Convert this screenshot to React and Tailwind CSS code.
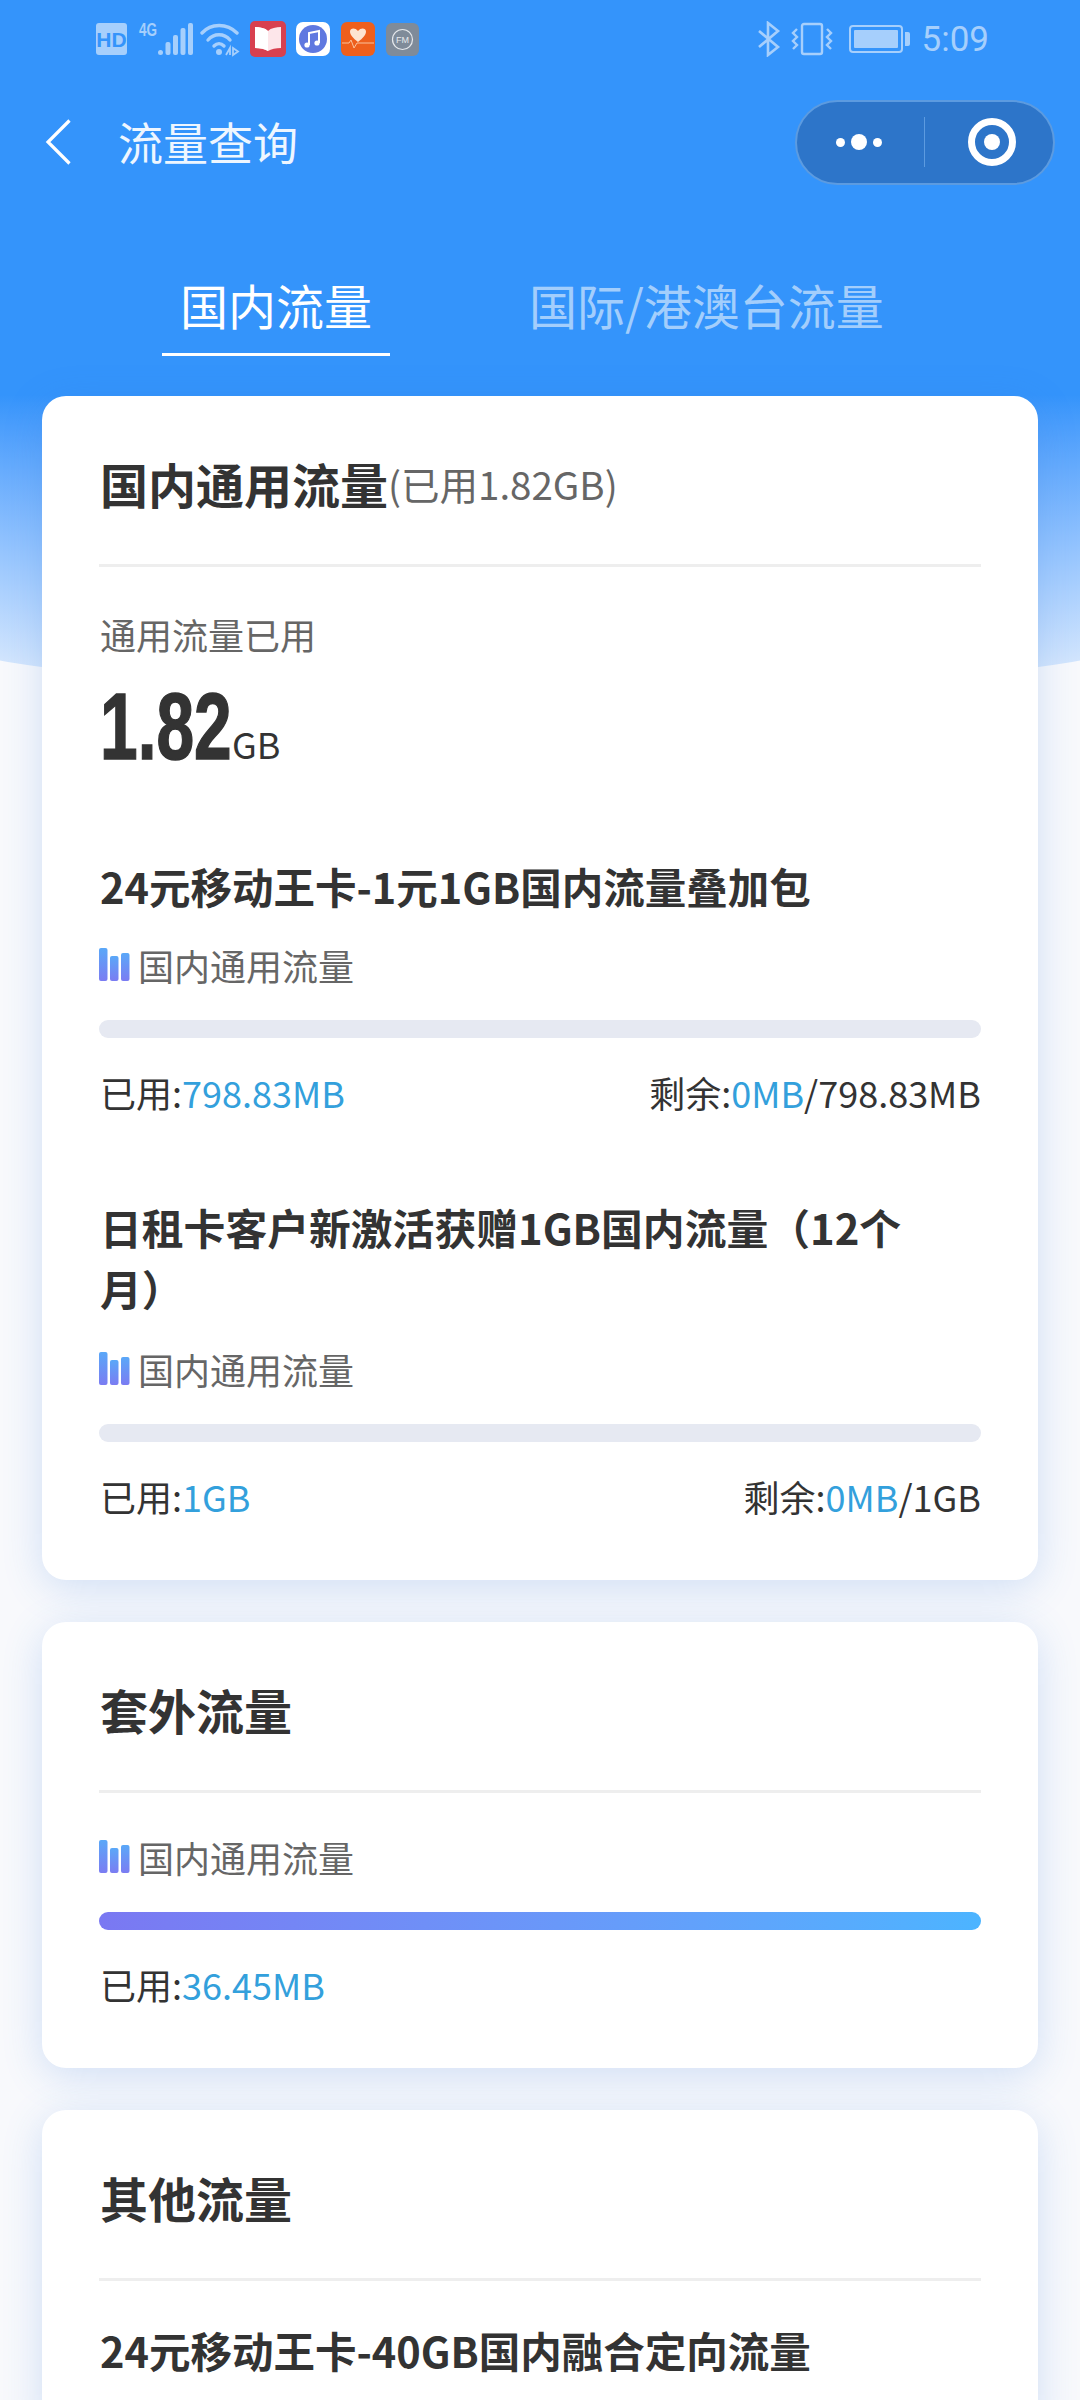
import React from "react";

const FONT = "font-['Noto_Sans_CJK_SC','Noto_Sans',sans-serif]";

function StatusLeft() {
  return (
    <div className="flex items-center">
      {/* HD */}
      <div className="w-[31px] h-[32px] rounded-[3px] bg-[#a6cffc] flex items-center justify-center text-[21px] leading-none font-bold text-[#3494fb] font-['Liberation_Sans',sans-serif]">
        HD
      </div>
      {/* 4G signal */}
      <svg width="57" height="36" viewBox="0 0 57 36" className="ml-[10px]" fill="#a6cffc">
        <text x="2" y="15" fontSize="18" fontWeight="700" fontFamily="Liberation Sans" textLength="18" lengthAdjust="spacingAndGlyphs">4G</text>
        <rect x="21" y="29" width="5" height="5" rx="2.500" />
        <rect x="28.500" y="21" width="5" height="13" rx="2" />
        <rect x="36" y="14" width="5" height="20" rx="2" />
        <rect x="43.500" y="7" width="5" height="27" rx="2" />
        <rect x="51" y="2" width="5" height="32" rx="2" />
      </svg>
      {/* wifi */}
      <svg width="40" height="36" viewBox="0 0 40 36" className="ml-[6px]" fill="none" stroke="#a6cffc" strokeWidth="3.400" strokeLinecap="round">
        <path d="M2 12C11 2 27 2 37 12" />
        <path d="M8 19C14 12 24 12 30 19" />
        <path d="M14 25C17 22 21 22 24 25" />
        <circle cx="19" cy="31" r="3" fill="#a6cffc" stroke="none" />
        <path d="M30 34V27L26 34M33 27V34L38 30.500Z" strokeWidth="1.800" strokeLinecap="butt" />
      </svg>
      {/* book */}
      <svg width="36" height="36" viewBox="0 0 36 36" className="ml-[10px]">
        <rect width="36" height="36" rx="5" fill="#d8404f" />
        <path d="M5 6C10 6 15 7 18 10C21 7 26 6 31 6V27C26 27 21 28 18 30C15 28 10 27 5 27Z" fill="#fde6ea" />
        <path d="M5 6C10 6 15 7 18 10V30C15 28 10 27 5 27Z" fill="#fff" />
      </svg>
      {/* music */}
      <svg width="34" height="34" viewBox="0 0 34 34" className="ml-[10px]">
        <rect width="34" height="34" rx="7" fill="#fff" />
        <circle cx="17" cy="17" r="14" fill="#5f78e0" />
        <path d="M13 23V11L23 9V21" fill="none" stroke="#fff" strokeWidth="2" />
        <circle cx="11" cy="23" r="2.600" fill="#fff" />
        <circle cx="21" cy="21" r="2.600" fill="#fff" />
      </svg>
      {/* heart */}
      <svg width="34" height="34" viewBox="0 0 34 34" className="ml-[11px]">
        <rect width="34" height="34" rx="6" fill="#ee5f1c" />
        <path d="M20 20C15 16 12 13 12 9.500C12 6 17 5 20 9C23 5 28 6 28 9.500C28 13 25 16 20 20Z" transform="translate(-3 0)" fill="#fde4d0" />
        <path d="M1 21H8L10 18L13 26L16 21H33" fill="none" stroke="#f9c29b" strokeWidth="1" />
      </svg>
      {/* FM */}
      <svg width="33" height="33" viewBox="0 0 33 33" className="ml-[11px]">
        <rect width="33" height="33" rx="6" fill="#7f8b99" />
        <circle cx="16.500" cy="16.500" r="10" fill="none" stroke="#e6e9ec" strokeWidth="1.200" />
        <text x="16.500" y="20" textAnchor="middle" fontSize="9" fill="#e6e9ec" fontFamily="Liberation Sans">FM</text>
      </svg>
    </div>
  );
}

function StatusRight() {
  return (
    <div className="flex items-center">
      {/* bluetooth */}
      <svg width="24" height="36" viewBox="0 0 24 36" fill="none" stroke="#a6cffc" strokeWidth="2.600">
        <path d="M2 10L21 26L11 34V2L21 10L2 26" />
      </svg>
      {/* vibrate */}
      <svg width="42" height="34" viewBox="0 0 42 34" className="ml-[10px]" fill="none" stroke="#a6cffc" strokeWidth="2.400">
        <rect x="11" y="2" width="20" height="30" rx="2" />
        <path d="M6 7L2 11L6 15L2 19L6 23L2 27" />
        <path d="M36 7L40 11L36 15L40 19L36 23L40 27" />
      </svg>
      {/* battery */}
      <div className="ml-[16px] w-[54px] h-[28px] rounded-[4px] border-2 border-[#a6cffc] p-[3px]">
        <div className="w-full h-full rounded-[1px] bg-[#a6cffc]" />
      </div>
      <div className="ml-[2px] w-[5px] h-[14px] rounded-r-[2px] bg-[#a6cffc]" />
      <span className="ml-[12px] text-[35px] leading-none text-[#a6cffc] font-['Roboto',sans-serif]">
        5:09
      </span>
    </div>
  );
}

function Capsule() {
  return (
    <div className="w-[260px] h-[85px] rounded-full bg-[#2d75c9] border-2 border-[#5c9be0] flex items-center">
      <div className="w-[124px] flex items-center justify-center gap-[6px]">
        <span className="w-[9px] h-[9px] rounded-full bg-white" />
        <span className="w-[16px] h-[16px] rounded-full bg-white" />
        <span className="w-[9px] h-[9px] rounded-full bg-white" />
      </div>
      <div className="w-[1px] h-[50px] ml-[3px] bg-[#5c9be0]" />
      <div className="flex-1 flex items-center justify-center pl-[5px]">
        <div className="w-[48px] h-[48px] rounded-full border-[7px] border-white flex items-center justify-center">
          <span className="w-[16px] h-[16px] rounded-full bg-white" />
        </div>
      </div>
    </div>
  );
}

function BarsIcon() {
  return (
    <svg width="31" height="34" viewBox="0 0 31 34" className="shrink-0">
      <defs>
        <linearGradient id="bars" x1="0" y1="0" x2="0" y2="1">
          <stop offset="0" stopColor="#5aa8f8" />
          <stop offset="1" stopColor="#7b7cf2" />
        </linearGradient>
      </defs>
      <rect x="0" y="0" width="8.500" height="33" rx="2" fill="url(#bars)" />
      <rect x="11" y="8" width="8.500" height="25" rx="2" fill="url(#bars)" />
      <rect x="22" y="5" width="8.500" height="28" rx="2" fill="url(#bars)" />
    </svg>
  );
}

function TagRow({ className }) {
  return (
    <div className={`flex items-center h-[50px] ${className}`}>
      <BarsIcon />
      <span className="ml-[8px] text-[36px] leading-[50px] text-[#666]">国内通用流量</span>
    </div>
  );
}

function Usage({ used, left, total }) {
  return (
    <div className="mt-[29px] flex justify-between text-[36px] leading-[50px] text-[#333]">
      <div className="pl-[1px]">
        已用:<span className="text-[#33a0dc]">{used}</span>
      </div>
      {left && (
        <div>
          剩余:<span className="text-[#33a0dc]">{left}</span>/{total}
        </div>
      )}
    </div>
  );
}

function CardHeader({ title, sub }) {
  return (
    <div className="h-[171px] pt-[5px] pl-[1px] border-b-[3px] border-[#eee] flex items-center">
      <span className="text-[48px] leading-[62px] font-bold text-[#333]">{title}</span>
      {sub && <span className="text-[38.5px] leading-[62px] text-[#666]">{sub}</span>}
    </div>
  );
}

function Card({ children, className = "" }) {
  return (
    <div className={`mx-[42px] px-[57px] rounded-[24px] bg-white shadow-[0_8px_40px_rgba(50,120,220,0.2)] ${className}`}>
      {children}
    </div>
  );
}

export default function App() {
  return (
    <div className={`relative w-[1080px] h-[2400px] overflow-hidden bg-[#f8f9fc] ${FONT}`}>
      {/* blue backdrop */}
      <div className="absolute top-0 left-[-100px] w-[1280px] h-[693px] rounded-b-[50%_70px] bg-gradient-to-b from-[#3494fb] from-[57%] to-[#e3eefc]" />

      <div className="relative">
        <div className="h-[78px] flex items-center justify-between pl-[96px] pr-[91px]">
          <StatusLeft />
          <StatusRight />
        </div>

        <div className="h-[128px] flex items-center justify-between pl-[45px] pr-[25px]">
          <div className="flex items-center">
            <svg width="26" height="46" viewBox="0 0 26 46" fill="none" stroke="#fff" strokeWidth="3.200">
              <path d="M24.500 1.500L3 23L24.500 44.500" />
            </svg>
            <span className="ml-[47px] text-[45px] leading-[60px] text-[#eef6ff]">流量查询</span>
          </div>
          <Capsule />
        </div>

        <div className="mt-[68px] mb-[40px] pl-[162px] flex gap-[139px] text-[48px] leading-[60px]">
          <div className="px-[18px] pb-[19px] border-b-[3px] border-white text-white">国内流量</div>
          <div className="pb-[19px] text-[#a3cefc]">国际/港澳台流量</div>
        </div>

        <Card className="pb-[59px]">
          <CardHeader title="国内通用流量" sub="(已用1.82GB)" />
          <div className="mt-[42px] pl-[1px] text-[36px] leading-[50px] text-[#666]">通用流量已用</div>
          <div className="mt-[23px] pl-[1px] h-[90px] flex items-baseline">
            <span className="w-[132px] shrink-0 text-[94px] leading-[90px] font-bold text-[#333] font-['Liberation_Sans',sans-serif] origin-left scale-x-[0.72] inline-block [-webkit-text-stroke:1.5px_#333]">
              1.82
            </span>
            <span className="text-[36px] leading-[50px] text-[#333]">GB</span>
          </div>

          <div className="mt-[83px] pl-[1px] text-[41.5px] leading-[62px] font-bold text-[#333]">
            24元移动王卡-1元1GB国内流量叠加包
          </div>
          <TagRow className="mt-[23px]" />
          <div className="mt-[30px] h-[18px] rounded-full bg-[#e6e9f2]" />
          <Usage used="798.83MB" left="0MB" total="798.83MB" />

          <div className="mt-[80px] pl-[1px] pr-[60px] text-[41.8px] leading-[61px] font-bold text-[#333]">
            日租卡客户新激活获赠1GB国内流量（12个月）
          </div>
          <TagRow className="mt-[25px]" />
          <div className="mt-[30px] h-[18px] rounded-full bg-[#e6e9f2]" />
          <Usage used="1GB" left="0MB" total="1GB" />
        </Card>

        <Card className="mt-[42px] pb-[59px]">
          <CardHeader title="套外流量" />
          <TagRow className="mt-[39px]" />
          <div className="mt-[30px] h-[18px] rounded-full bg-gradient-to-r from-[#7a78f2] to-[#4cb4ff]" />
          <Usage used="36.45MB" />
        </Card>

        <Card className="mt-[42px] pb-[60px]">
          <CardHeader title="其他流量" />
          <div className="mt-[38px] pl-[1px] text-[41.5px] leading-[62px] font-bold text-[#333]">
            24元移动王卡-40GB国内融合定向流量
          </div>
        </Card>
      </div>
    </div>
  );
}
